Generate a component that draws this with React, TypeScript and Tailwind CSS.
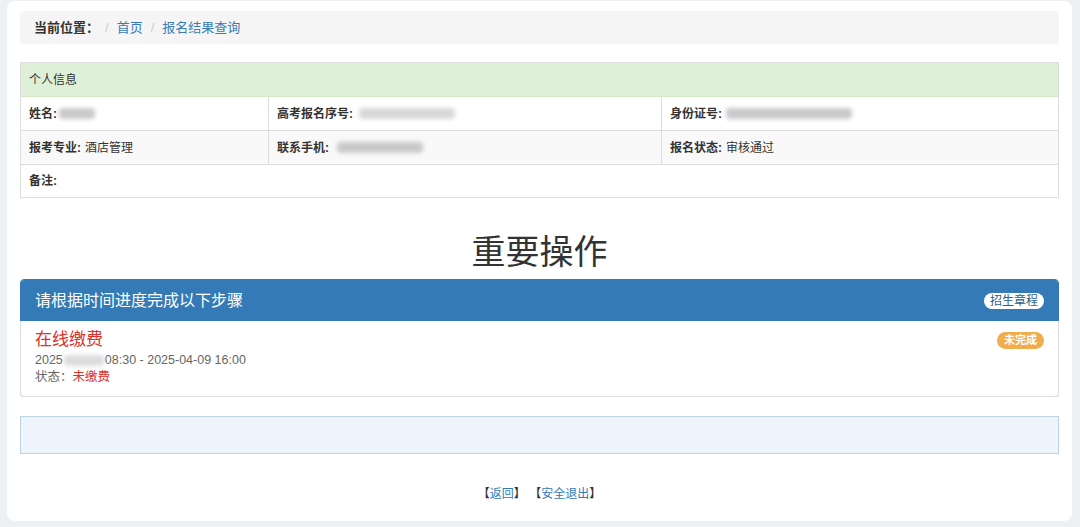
const font = { fontFamily: '"Liberation Sans", "Noto Sans CJK SC", sans-serif' }

function Blur({ w, className = '' }: { w: number; className?: string }) {
  return (
    <span
      className={`inline-block h-[11px] align-middle bg-[#c9c9c9] blur-[2px] rounded-sm ${className}`}
      style={{ width: w }}
    />
  )
}

function Cell({ children, last = false }: { children: React.ReactNode; last?: boolean }) {
  return (
    <div className={`flex items-center px-[8px] ${last ? '' : 'border-r border-[#ddd]'}`}>
      {children}
    </div>
  )
}

export default function App() {
  return (
    <div className="w-[1080px] h-[527px] bg-[#eef1f4] pl-[7px] pr-[8px] pt-[1px] pb-[6px] text-[#333]" style={font}>
      <div className="h-full bg-white rounded-lg px-[13px] pt-[10px] flex flex-col">
        {/* breadcrumb */}
        <div className="h-[33px] bg-[#f5f5f5] rounded flex items-center px-[14px] text-[13px]">
          <span className="font-bold text-[#333]">当前位置：</span>
          <span className="text-[#ccc] ml-[6px] mr-[8px]">/</span>
          <span className="text-[#3a7cb5]">首页</span>
          <span className="text-[#ccc] mx-[8px]">/</span>
          <span className="text-[#3a7cb5]">报名结果查询</span>
        </div>

        {/* info table */}
        <div className="mt-[18px] border border-[#ddd] text-[12px]">
          <div className="h-[34px] bg-[#dff0d8] border-b border-[#d6e9c6] flex items-center px-[8px] text-[#333]">
            个人信息
          </div>
          <div className="grid grid-cols-[248px_393px_1fr] h-[34px] border-b border-[#ddd]">
            <Cell>
              <b>姓名:</b>
              <Blur w={36} className="ml-[2px]" />
            </Cell>
            <Cell>
              <b>高考报名序号:</b>
              <Blur w={96} className="ml-[6px] bg-[#d8d8d8]" />
            </Cell>
            <Cell last>
              <b>身份证号:</b>
              <Blur w={126} className="ml-[4px]" />
            </Cell>
          </div>
          <div className="grid grid-cols-[248px_393px_1fr] h-[34px] border-b border-[#ddd] bg-[#f9f9f9]">
            <Cell>
              <b>报考专业:</b>
              <span className="ml-[4px]">酒店管理</span>
            </Cell>
            <Cell>
              <b>联系手机:</b>
              <Blur w={86} className="ml-[8px]" />
            </Cell>
            <Cell last>
              <b>报名状态:</b>
              <span className="ml-[4px]">审核通过</span>
            </Cell>
          </div>
          <div className="h-[32px] flex items-center px-[8px]">
            <b>备注:</b>
          </div>
        </div>

        <h2 className="text-center text-[34px] leading-none text-[#333] mt-[37px] mb-[10px]" style={font}>
          重要操作
        </h2>

        {/* steps panel */}
        <div className="border border-[#337ab7] rounded">
          <div className="h-[41px] bg-[#337ab7] flex items-center justify-between px-[14px] text-white rounded-t-[3px]">
            <span className="text-[16px]">请根据时间进度完成以下步骤</span>
            <span className="bg-white text-[#2f5f88] text-[12px] leading-none rounded-full px-[6px] py-[2px]">
              招生章程
            </span>
          </div>
          <div className="bg-white h-[76px] border-x border-b border-[#ddd] -mx-px -mb-px rounded-b px-[14px] pt-[8px] flex justify-between">
            <div>
              <div className="text-[17px] leading-[22px] text-[#e0302a]">在线缴费</div>
              <div className="text-[12.5px] leading-[17px] text-[#666] mt-[1px] flex items-center">
                2025
                <Blur w={40} className="mx-[1px] bg-[#dcdcdc]" />
                08:30 - 2025-04-09 16:00
              </div>
              <div className="text-[12.5px] leading-[17px] text-[#666]">
                状态：<span className="text-[#e0302a]">未缴费</span>
              </div>
            </div>
            <div className="-mt-[2px]">
              <span className="inline-block bg-[#f0ad4e] text-white text-[11px] leading-none font-bold rounded-full px-[7px] py-[3px]">
                未完成
              </span>
            </div>
          </div>
        </div>

        {/* alert */}
        <div className="mt-[19px] h-[38px] bg-[#eef5fc] border border-[#bcd5e6]" />

        {/* footer */}
        <div className="mt-[31px] text-center text-[12px] text-[#333]">
          【<span className="text-[#337ab7]">返回</span>】 【<span className="text-[#337ab7]">安全退出</span>】
        </div>
      </div>
    </div>
  )
}
